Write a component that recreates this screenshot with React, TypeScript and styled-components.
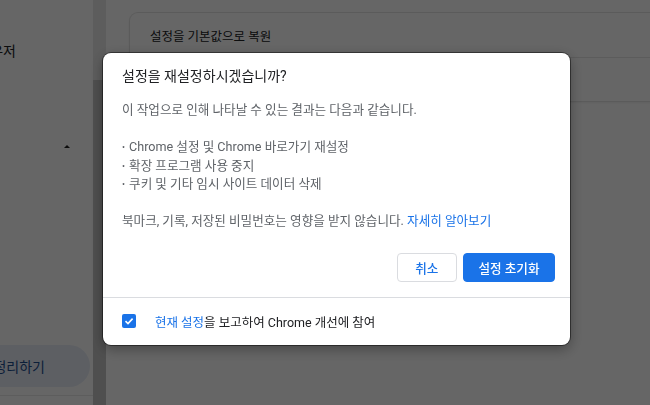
import React from 'react';
import styled, { createGlobalStyle } from 'styled-components';

const GlobalStyle = createGlobalStyle`
    html, body {
        margin: 0;
        padding: 0;
        background: #ffffff;
    }
    body {
        font-family: Roboto, "Noto Sans CJK KR", sans-serif;
        width: 650px;
        height: 405px;
        overflow: hidden;
    }
`;

const Page = styled.div`
    display: flex;
    width: 650px;
    height: 405px;
    overflow: hidden;
    background: #ffffff;
`;

const Sidebar = styled.nav`
    position: relative;
    width: 93px;
    flex-shrink: 0;
    display: flex;
    flex-direction: column;
    overflow: hidden;
`;

const NavItem = styled.div`
    display: flex;
    justify-content: flex-end;
    height: 20px;
    align-items: center;
    margin-top: 40px;
    padding-right: 77px;
    white-space: nowrap;
    font-size: 14px;
    color: #202124;
`;

const Spacer = styled.div`
    flex: 1;
`;

const PillRow = styled.div`
    display: flex;
    justify-content: flex-end;
    padding-right: 3px;
`;

const Pill = styled.div`
    display: flex;
    align-items: center;
    flex-shrink: 0;
    height: 42px;
    padding: 0 45px 0 40px;
    border-radius: 21px;
    background: #e8eef8;
    color: #1f4f8f;
    font-size: 14px;
    white-space: nowrap;
`;

const Divider = styled.hr`
    margin: 8px 0 9px;
    border: 0;
    border-top: 1px solid #e8e8e8;
`;

const Caret = styled.span`
    position: absolute;
    left: 64px;
    top: 145px;
    width: 0;
    height: 0;
    border-left: 3px solid transparent;
    border-right: 3px solid transparent;
    border-bottom: 3px solid #222;
`;

const ScrollTrack = styled.div`
    width: 13px;
    flex-shrink: 0;
    display: flex;
    flex-direction: column;
    padding-top: 80px;
    background: #e9e9e9;
`;

const ScrollThumb = styled.div`
    flex: 1;
    background: #c6c6c6;
`;

const Main = styled.main`
    flex: 1;
    overflow: hidden;
    padding: 13px 0 0 24px;
`;

const Card = styled.section`
    width: 600px;
    background: #ffffff;
    border-radius: 8px 0 0 0;
    box-shadow: 0 0 0 1px #e4e4e4, 0 1px 3px rgba(0, 0, 0, 0.12);
`;

const CardRow = styled.div`
    height: 44px;
    display: flex;
    align-items: center;
    padding-left: 20px;
    font-size: 12.5px;
    color: #202124;
    border-top: ${props => (props.$first ? 'none' : '1px solid #e6e6e6')};
    box-sizing: border-box;
`;

const Overlay = styled.div`
    position: fixed;
    inset: 0;
    background: rgba(0, 0, 0, 0.6);
    display: flex;
    align-items: flex-start;
    padding: 53px 0 0 103px;
`;

const Dialog = styled.div`
    width: 467px;
    background: #ffffff;
    border-radius: 8px;
    box-shadow: 0 0 0 1px rgba(0, 0, 0, 0.45), 0 4px 14px rgba(0, 0, 0, 0.35);
    display: flex;
    flex-direction: column;
`;

const Title = styled.h2`
    margin: 0;
    padding: 11px 19px 0;
    font-size: 14px;
    line-height: 24px;
    font-weight: 400;
    color: #202124;
`;

const Body = styled.div`
    padding: 13px 19px 0;
    font-size: 12.6px;
    line-height: 18.5px;
    color: #5f6368;
`;

const Para = styled.p`
    margin: 0 0 18.5px;
`;

const List = styled.ul`
    margin: 0 0 18.5px;
    padding: 0;
    list-style: none;
`;

const Bullet = styled.li`
    &::before {
        content: '•';
        font-size: 9px;
        margin-right: 4px;
        vertical-align: 1px;
    }
`;

const Link = styled.a`
    color: #1a73e8;
    text-decoration: none;
`;

const Actions = styled.div`
    display: flex;
    justify-content: flex-end;
    gap: 6px;
    padding: 22px 15px 15px;
    border-bottom: 1px solid #dadce0;
`;

const Button = styled.button`
    height: 29px;
    padding: 0 ${props => (props.$primary ? '14.5px' : '17.5px')};
    font-family: inherit;
    font-size: 12.6px;
    font-weight: 500;
    border-radius: 4px;
    cursor: pointer;
    border: 1px solid ${props => (props.$primary ? '#1a73e8' : '#dadce0')};
    background: ${props => (props.$primary ? '#1a73e8' : '#ffffff')};
    color: ${props => (props.$primary ? '#ffffff' : '#1a73e8')};
`;

const Footer = styled.label`
    height: 47px;
    display: flex;
    align-items: center;
    padding-left: 19px;
    font-size: 12.5px;
    color: #202124;
`;

const Checkbox = styled.span`
    width: 14px;
    height: 14px;
    border-radius: 2px;
    background: #1a73e8;
    display: flex;
    align-items: center;
    justify-content: center;
    margin-right: 19px;
`;

export default function App() {
    return (
        <>
            <GlobalStyle />
            <Page>
                <Sidebar>
                    <NavItem>기본 브라우저</NavItem>
                    <Caret />
                    <Spacer />
                    <PillRow>
                        <Pill>컴퓨터 정리하기</Pill>
                    </PillRow>
                    <Divider />
                </Sidebar>
                <ScrollTrack>
                    <ScrollThumb />
                </ScrollTrack>
                <Main>
                    <Card>
                        <CardRow $first>설정을 기본값으로 복원</CardRow>
                        <CardRow />
                    </Card>
                </Main>
            </Page>
            <Overlay>
                <Dialog role="dialog">
                    <Title>설정을 재설정하시겠습니까?</Title>
                    <Body>
                        <Para>이 작업으로 인해 나타날 수 있는 결과는 다음과 같습니다.</Para>
                        <List>
                            <Bullet>Chrome 설정 및 Chrome 바로가기 재설정</Bullet>
                            <Bullet>확장 프로그램 사용 중지</Bullet>
                            <Bullet>쿠키 및 기타 임시 사이트 데이터 삭제</Bullet>
                        </List>
                        <div>
                            북마크, 기록, 저장된 비밀번호는 영향을 받지 않습니다.{' '}
                            <Link href="#">자세히 알아보기</Link>
                        </div>
                    </Body>
                    <Actions>
                        <Button>취소</Button>
                        <Button $primary>설정 초기화</Button>
                    </Actions>
                    <Footer>
                        <Checkbox>
                            <svg width="10" height="10" viewBox="0 0 10 10">
                                <path d="M1.5 5.2 L4 7.6 L8.6 2.6" fill="none" stroke="#fff" strokeWidth="1.6" />
                            </svg>
                        </Checkbox>
                        <span>
                            <Link as="span">현재 설정</Link>을 보고하여 Chrome 개선에 참여
                        </span>
                    </Footer>
                </Dialog>
            </Overlay>
        </>
    );
}
